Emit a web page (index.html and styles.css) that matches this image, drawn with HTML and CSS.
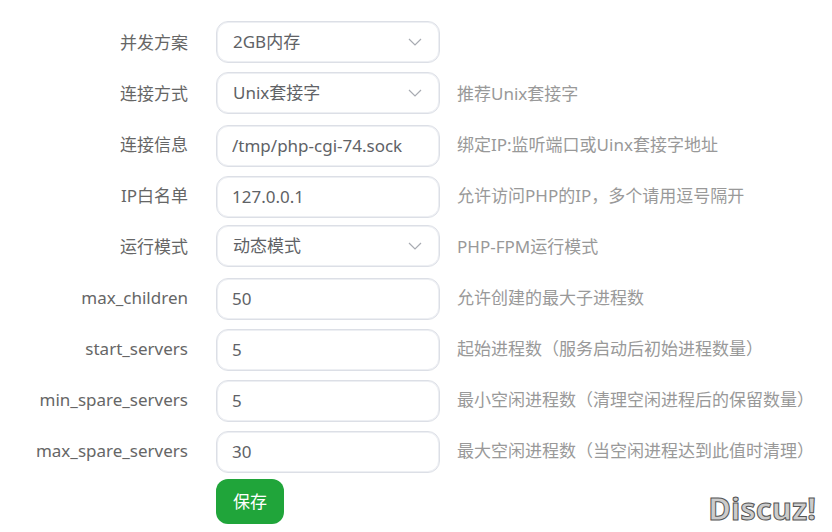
FILE: index.html
```html
<!DOCTYPE html>
<html lang="zh-CN">
<head>
    <meta charset="UTF-8">
    <meta name="viewport" content="width=device-width, initial-scale=1.0">
    <title>PHP-FPM 性能调整</title>
    <link rel="stylesheet" href="styles.css">
</head>
<body>
    <svg class="symbols" aria-hidden="true">
        <symbol id="arrow-down" viewBox="0 0 14 8">
            <path d="M1 1l6 6 6-6" fill="none" stroke="currentColor" stroke-width="1.2"/>
        </symbol>
    </svg>

    <form class="fpm-form">
        <div class="line">
            <label for="limit">并发方案</label>
            <div class="select-box">
                <select id="limit" name="limit">
                    <option>2GB内存</option>
                </select>
                <svg class="arrow"><use href="#arrow-down"/></svg>
            </div>
        </div>
        <div class="line">
            <label for="listen_type">连接方式</label>
            <div class="select-box">
                <select id="listen_type" name="listen_type">
                    <option>Unix套接字</option>
                    <option>TCP套接字</option>
                </select>
                <svg class="arrow"><use href="#arrow-down"/></svg>
            </div>
            <span class="tips">推荐Unix套接字</span>
        </div>
        <div class="line">
            <label for="listen">连接信息</label>
            <input type="text" id="listen" name="listen" value="/tmp/php-cgi-74.sock">
            <span class="tips">绑定IP:监听端口或Uinx套接字地址</span>
        </div>
        <div class="line">
            <label for="allowed">IP白名单</label>
            <input type="text" id="allowed" name="allowed" value="127.0.0.1">
            <span class="tips">允许访问PHP的IP，多个请用逗号隔开</span>
        </div>
        <div class="line">
            <label for="pm">运行模式</label>
            <div class="select-box">
                <select id="pm" name="pm">
                    <option>动态模式</option>
                    <option>静态模式</option>
                </select>
                <svg class="arrow"><use href="#arrow-down"/></svg>
            </div>
            <span class="tips">PHP-FPM运行模式</span>
        </div>
        <div class="line">
            <label for="max_children">max_children</label>
            <input type="text" id="max_children" name="max_children" value="50">
            <span class="tips">允许创建的最大子进程数</span>
        </div>
        <div class="line">
            <label for="start_servers">start_servers</label>
            <input type="text" id="start_servers" name="start_servers" value="5">
            <span class="tips">起始进程数（服务启动后初始进程数量）</span>
        </div>
        <div class="line">
            <label for="min_spare_servers">min_spare_servers</label>
            <input type="text" id="min_spare_servers" name="min_spare_servers" value="5">
            <span class="tips">最小空闲进程数（清理空闲进程后的保留数量）</span>
        </div>
        <div class="line">
            <label for="max_spare_servers">max_spare_servers</label>
            <input type="text" id="max_spare_servers" name="max_spare_servers" value="30">
            <span class="tips">最大空闲进程数（当空闲进程达到此值时清理）</span>
        </div>
        <div class="actions">
            <button type="submit" class="save-button">保存</button>
        </div>
    </form>

    <div class="watermark">Discuz!</div>
</body>
</html>
```

FILE: styles.css
```css
:root {
    --text: #666;
    --tips: #999;
    --border: #dcdfe6;
    --primary: #20a53a;
}

* {
    box-sizing: border-box;
}

body {
    position: relative;
    margin: 0;
    background: #fff;
    color: var(--text);
    font-family: "Noto Sans", "Noto Sans CJK SC", sans-serif;
    font-size: 17px;
    line-height: 24px;
}

.symbols {
    position: absolute;
    width: 0;
    height: 0;
}

.fpm-form {
    padding: 18px 0 8px;
}

.line {
    display: flex;
    align-items: center;
    min-height: 51px;
}

.line label {
    width: 188px;
    margin-right: 28px;
    padding-bottom: 2px;
    text-align: right;
    flex-shrink: 0;
}

.line input,
.line select {
    width: 224px;
    height: 42px;
    padding: 0 16px;
    border: 1px solid var(--border);
    border-radius: 12px;
    background: #fff;
    box-shadow: inset 0 0 0 1px #edeff3;
    color: #606266;
    font: inherit;
    outline: none;
}

.line input {
    padding: 0 15px;
    flex-shrink: 0;
}

.line select {
    display: block;
    appearance: none;
    cursor: pointer;
}

.line input:focus,
.line select:focus {
    border-color: var(--primary);
}

.select-box {
    position: relative;
    margin-bottom: 3px;
    flex-shrink: 0;
}

.arrow {
    position: absolute;
    top: 17px;
    right: 18px;
    width: 14px;
    height: 8px;
    color: #a8abb2;
    pointer-events: none;
}

.tips {
    margin-left: 17px;
    padding-bottom: 2px;
    color: var(--tips);
    white-space: nowrap;
}

.actions {
    padding: 2px 0 0 216px;
}

.save-button {
    height: 45px;
    padding: 0 17px;
    border: none;
    border-radius: 12px;
    background: var(--primary);
    color: #fff;
    font: inherit;
    cursor: pointer;
}

.watermark {
    position: absolute;
    right: 16px;
    bottom: 8px;
    color: #ccc;
    font-size: 31px;
    font-weight: bold;
    line-height: 32px;
    -webkit-text-stroke: 1px #555;
    pointer-events: none;
}
```
